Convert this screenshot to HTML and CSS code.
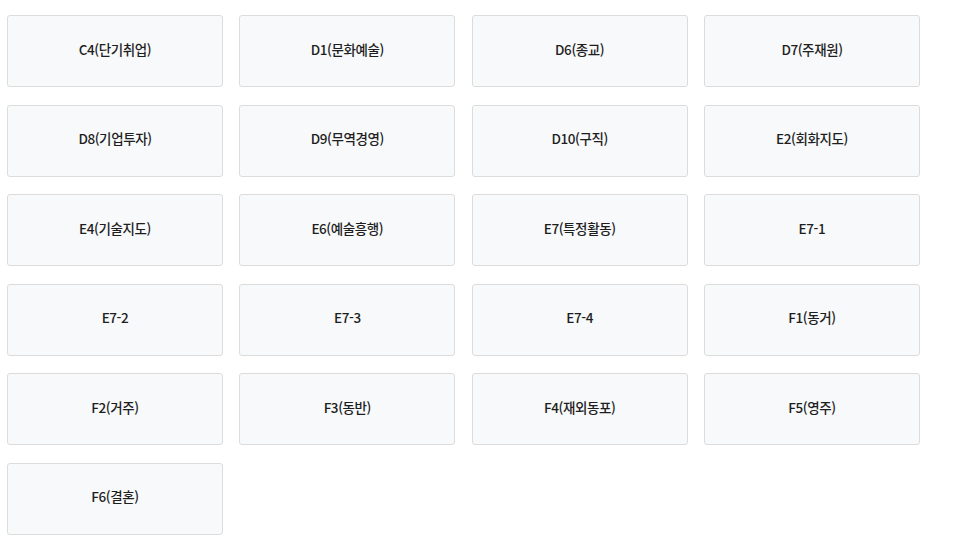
FILE: index.html
```html
<!DOCTYPE html>
<html lang="ko">
<head>
<meta charset="utf-8">
<link rel="stylesheet" href="styles.css">
</head>
<body>
<div class="grid">
  <div class="card">C4(단기취업)</div>
  <div class="card">D1(문화예술)</div>
  <div class="card">D6(종교)</div>
  <div class="card">D7(주재원)</div>
  <div class="card">D8(기업투자)</div>
  <div class="card">D9(무역경영)</div>
  <div class="card">D10(구직)</div>
  <div class="card">E2(회화지도)</div>
  <div class="card">E4(기술지도)</div>
  <div class="card">E6(예술흥행)</div>
  <div class="card">E7(특정활동)</div>
  <div class="card">E7-1</div>
  <div class="card">E7-2</div>
  <div class="card">E7-3</div>
  <div class="card">E7-4</div>
  <div class="card">F1(동거)</div>
  <div class="card">F2(거주)</div>
  <div class="card">F3(동반)</div>
  <div class="card">F4(재외동포)</div>
  <div class="card">F5(영주)</div>
  <div class="card">F6(결혼)</div>
</div>
</body>
</html>
```
FILE: styles.css
```css
html, body {
  margin: 0;
  padding: 0;
  background: #ffffff;
}
body {
  padding: 15px 7px;
  font-family: "Noto Sans CJK KR", "Noto Sans", sans-serif;
}
.grid {
  display: grid;
  grid-template-columns: repeat(4, 216px);
  column-gap: 16.33px;
  row-gap: 17.6px;
}
.card {
  box-sizing: border-box;
  height: 72px;
  border: 1px solid #dcdcdc;
  border-radius: 3px;
  background: #f8f9fa;
  display: flex;
  align-items: center;
  justify-content: center;
  padding-bottom: 5px;
  font-size: 13.5px;
  font-weight: 500;
  color: #1e1e1e;
  letter-spacing: -0.4px;
}
```
